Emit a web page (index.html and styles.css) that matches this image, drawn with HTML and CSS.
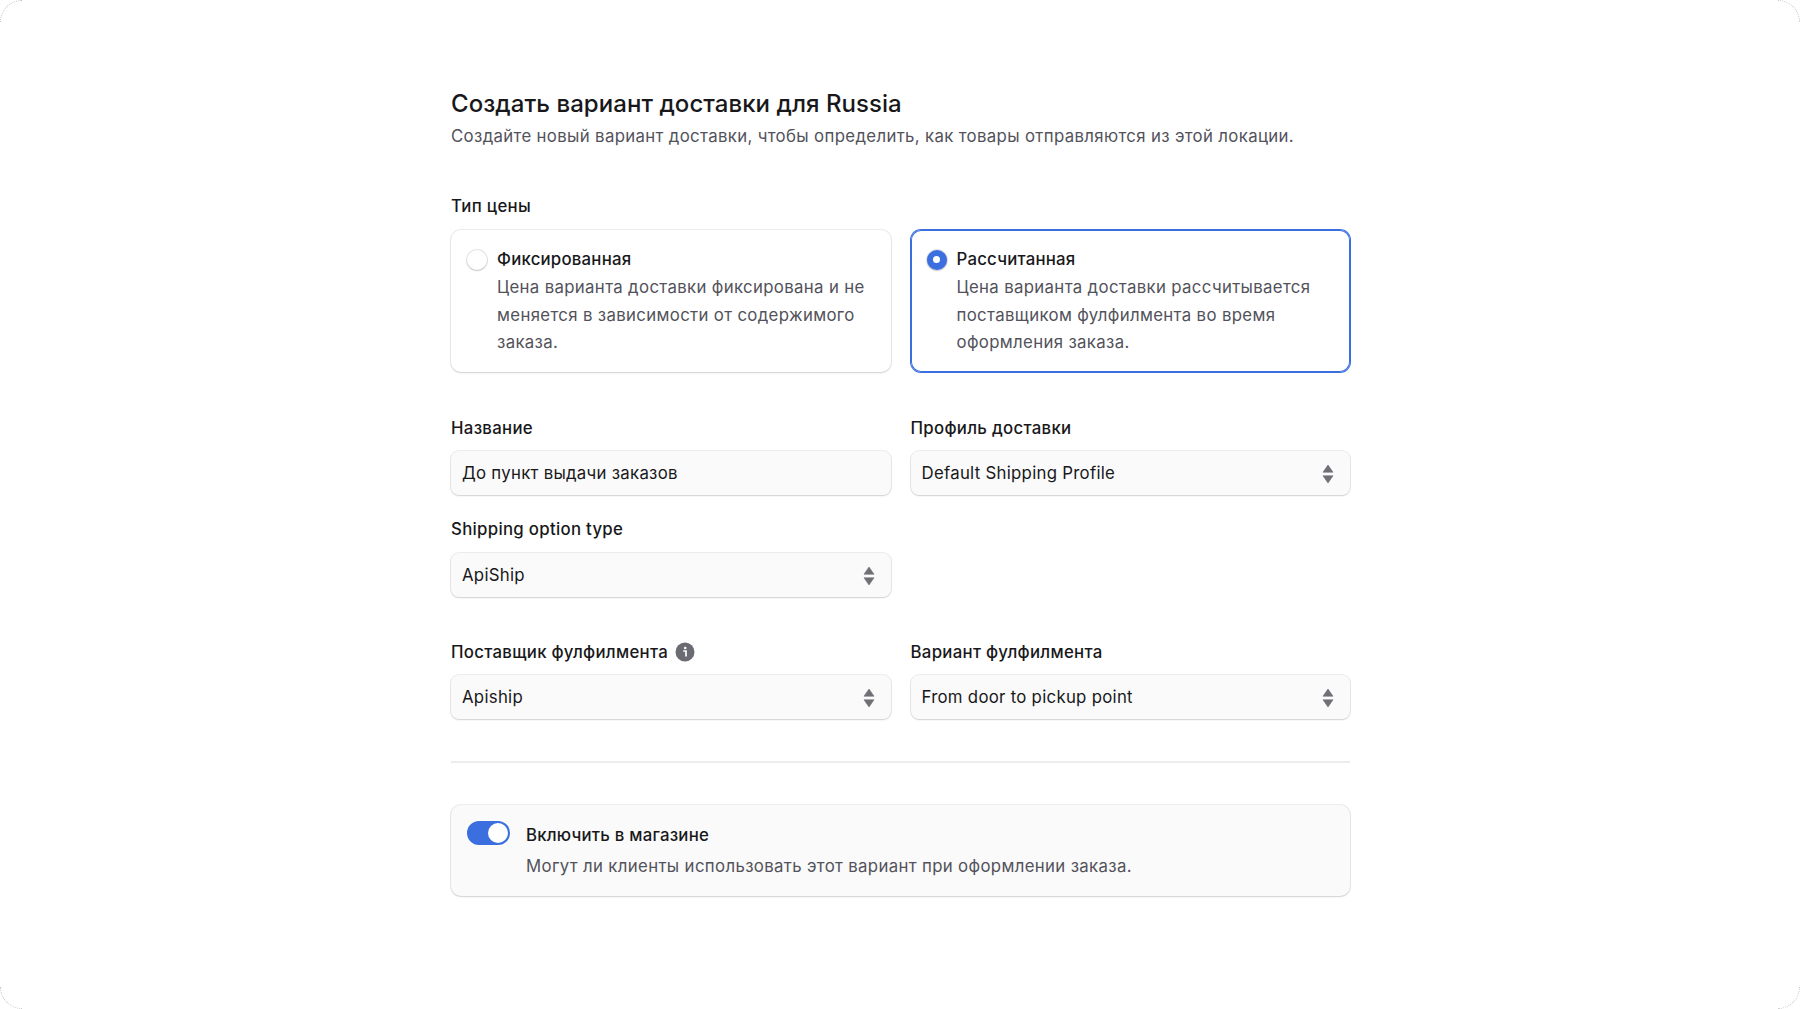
FILE: index.html
```html
<!DOCTYPE html>
<html lang="ru">
<head>
    <meta charset="UTF-8">
    <meta name="viewport" content="width=device-width, initial-scale=1.0">
    <title>Создать вариант доставки</title>
    <link rel="stylesheet" href="styles.css">
</head>
<body>
    <span class="corner corner-tl"></span>
    <span class="corner corner-tr"></span>
    <span class="corner corner-bl"></span>
    <span class="corner corner-br"></span>

    <main class="container">
        <header class="page-head">
            <h1>Создать вариант доставки для Russia</h1>
            <p class="muted">Создайте новый вариант доставки, чтобы определить, как товары отправляются из этой локации.</p>
        </header>

        <section class="price-type">
            <div class="label">Тип цены</div>
            <div class="two-cols">
                <div class="radio-card">
                    <span class="radio"></span>
                    <div>
                        <div class="radio-title">Фиксированная</div>
                        <div class="radio-text muted">Цена варианта доставки фиксирована и не меняется в зависимости от содержимого заказа.</div>
                    </div>
                </div>
                <div class="radio-card selected">
                    <span class="radio checked"></span>
                    <div>
                        <div class="radio-title">Рассчитанная</div>
                        <div class="radio-text muted">Цена варианта доставки рассчитывается поставщиком фулфилмента во время оформления заказа.</div>
                    </div>
                </div>
            </div>
        </section>

        <section class="fields">
            <div class="two-cols">
                <div class="field">
                    <div class="label">Название</div>
                    <div class="control">До пункт выдачи заказов</div>
                </div>
                <div class="field">
                    <div class="label">Профиль доставки</div>
                    <div class="control">
                        Default Shipping Profile
                        <svg class="updown" viewBox="0 0 12 20"><path d="M6 1 11 8.2H1zM6 19 1 11.8h10z" stroke-linejoin="round"/></svg>
                    </div>
                </div>
                <div class="field">
                    <div class="label">Shipping option type</div>
                    <div class="control">
                        ApiShip
                        <svg class="updown" viewBox="0 0 12 20"><path d="M6 1 11 8.2H1zM6 19 1 11.8h10z" stroke-linejoin="round"/></svg>
                    </div>
                </div>
            </div>
        </section>

        <section class="fields fulfilment">
            <div class="two-cols">
                <div class="field">
                    <div class="label label-icon">
                        Поставщик фулфилмента
                        <svg class="info" viewBox="0 0 20 20">
                            <circle cx="10" cy="10" r="9.5" fill="#6b6b73"/>
                            <circle cx="10.2" cy="6" r="1.3" fill="#fff"/>
                            <path d="M8.2 9h2.8v5.6" fill="none" stroke="#fff" stroke-width="1.7"/>
                        </svg>
                    </div>
                    <div class="control">
                        Apiship
                        <svg class="updown" viewBox="0 0 12 20"><path d="M6 1 11 8.2H1zM6 19 1 11.8h10z" stroke-linejoin="round"/></svg>
                    </div>
                </div>
                <div class="field">
                    <div class="label">Вариант фулфилмента</div>
                    <div class="control">
                        From door to pickup point
                        <svg class="updown" viewBox="0 0 12 20"><path d="M6 1 11 8.2H1zM6 19 1 11.8h10z" stroke-linejoin="round"/></svg>
                    </div>
                </div>
            </div>
        </section>

        <hr class="divider">

        <section class="switch-box">
            <span class="switch"><span class="knob"></span></span>
            <div>
                <div class="switch-title">Включить в магазине</div>
                <div class="switch-text muted">Могут ли клиенты использовать этот вариант при оформлении заказа.</div>
            </div>
        </section>
    </main>
</body>
</html>
```
FILE: styles.css
```css
* {
    box-sizing: border-box;
}

body {
    font-family: Inter, "Noto Sans", sans-serif;
    font-size: 16.8px;
    letter-spacing: 0.22px;
    line-height: 27.5px;
    margin: 0;
    min-height: 100vh;
    background: #fff;
    color: #18181b;
}

.muted {
    color: #52525b;
    letter-spacing: 0.34px;
}

.corner {
    position: fixed;
    width: 22px;
    height: 22px;
    border: 0 dotted #c4c4c4;
}

.corner-tl {
    top: 0;
    left: 0;
    border-top-width: 1px;
    border-left-width: 1px;
    border-top-left-radius: 22px;
}

.corner-tr {
    top: 0;
    right: 0;
    border-top-width: 1px;
    border-right-width: 1px;
    border-top-right-radius: 22px;
}

.corner-bl {
    bottom: 0;
    left: 0;
    border-bottom-width: 1px;
    border-left-width: 1px;
    border-bottom-left-radius: 22px;
}

.corner-br {
    bottom: 0;
    right: 0;
    border-bottom-width: 1px;
    border-right-width: 1px;
    border-bottom-right-radius: 22px;
}

.container {
    width: 899px;
    margin-left: 451px;
    padding-top: 88px;
}

h1 {
    font-size: 24px;
    line-height: 32px;
    font-weight: 500;
    letter-spacing: 0.05px;
    margin: 0;
}

.page-head p {
    margin: 0;
    line-height: 32px;
}

.price-type {
    margin-top: 41px;
}

.label {
    font-weight: 500;
    letter-spacing: 0.3px;
    margin-bottom: 9px;
}

.two-cols {
    display: grid;
    grid-template-columns: 1fr 1fr;
    column-gap: 20px;
}

.radio-card {
    display: flex;
    gap: 10px;
    height: 142px;
    padding: 16px 16px;
    border-radius: 10px;
    box-shadow: 0 0 0 1px rgba(0, 0, 0, 0.07), 0 1px 2px rgba(0, 0, 0, 0.12);
}

.radio-card.selected {
    box-shadow: inset 0 0 0 1px #3b6fe0, 0 0 0 1px #3b6fe0;
}

.radio {
    flex: none;
    width: 20px;
    height: 20px;
    margin-top: 4px;
    border-radius: 50%;
    box-shadow: 0 0 0 1px rgba(0, 0, 0, 0.1), 0 1px 2px rgba(0, 0, 0, 0.14);
}

.radio.checked {
    background: #3b6fe0;
    position: relative;
}

.radio.checked::after {
    content: "";
    position: absolute;
    top: 6.5px;
    left: 6.5px;
    width: 7px;
    height: 7px;
    border-radius: 50%;
    background: #fff;
}

.radio-title {
    font-weight: 500;
    margin-bottom: 1px;
}

.fields {
    margin-top: 43px;
}

.field {
    margin-bottom: 21px;
}

.fulfilment {
    margin-top: 21px;
}

.label-icon {
    display: flex;
    align-items: center;
    gap: 7px;
}

.info {
    width: 20px;
    height: 20px;
}

.control {
    display: flex;
    align-items: center;
    justify-content: space-between;
    height: 44px;
    padding: 2px 16px 0 11px;
    border-radius: 8px;
    background: #fafafa;
    letter-spacing: 0.28px;
    box-shadow: 0 0 0 1px rgba(0, 0, 0, 0.07), 0 1px 2px rgba(0, 0, 0, 0.12);
}

.updown {
    width: 12px;
    height: 20px;
    fill: #6f6f76;
    stroke: #6f6f76;
    stroke-width: 0.6;
}

.divider {
    border: 0;
    border-top: 2px solid #ececee;
    margin: 21px 0 42px;
}

.switch-box {
    display: flex;
    gap: 16px;
    height: 91px;
    padding: 16px 16px;
    border-radius: 10px;
    background: #fafafa;
    box-shadow: 0 0 0 1px rgba(0, 0, 0, 0.07), 0 1px 2px rgba(0, 0, 0, 0.12);
}

.switch {
    flex: none;
    display: flex;
    justify-content: flex-end;
    align-items: center;
    width: 43px;
    height: 24px;
    padding: 0 2px;
    border-radius: 12px;
    background: #3b6fe0;
}

.knob {
    width: 20px;
    height: 20px;
    border-radius: 50%;
    background: #fff;
}

.switch-title {
    font-weight: 500;
    margin-top: 1px;
}

.switch-text {
    margin-top: 3px;
}
```
